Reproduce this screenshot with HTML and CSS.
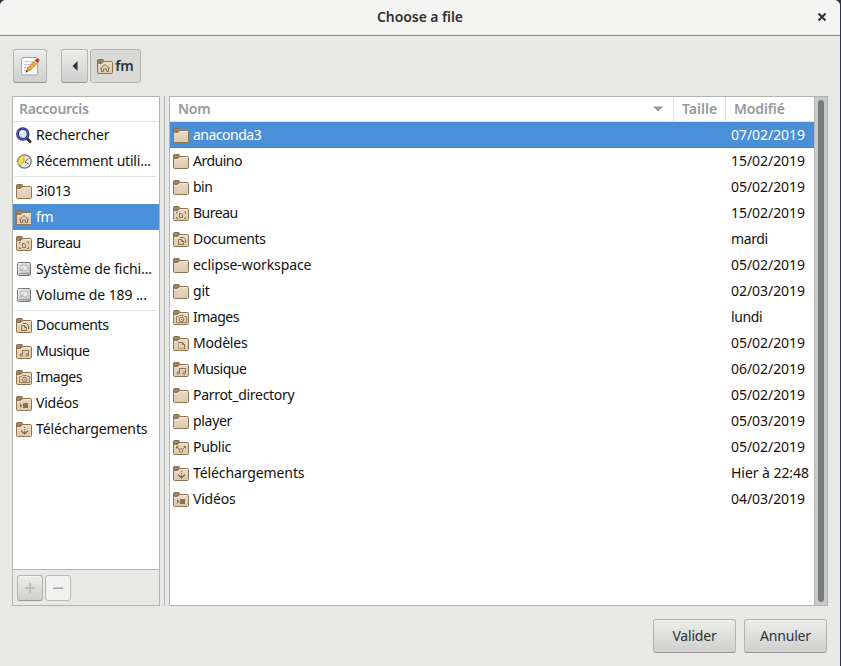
FILE: index.html
```html
<!DOCTYPE html>
<html lang="fr">
<head>
<meta charset="utf-8">
<title>Choose a file</title>
<link rel="stylesheet" href="styles.css">
</head>
<body>
<svg class="defs" aria-hidden="true">
<defs>
<linearGradient id="paper" x2="0" y2="1"><stop offset="0" stop-color="#eadbc7"/><stop offset="1" stop-color="#dcc9ae"/></linearGradient>
<linearGradient id="metal" x2="1" y2="1"><stop offset="0" stop-color="#fff"/><stop offset="1" stop-color="#aaa"/></linearGradient>
<symbol id="folder" viewBox="0 0 16 16"><path d="M.5 13.5V2.5q0-1 1-1h4q1 0 1 1v2h-3q-1 0-1 1z" fill="#9d8667" stroke="#83694a"/><path d="M.5 14.5V6q0-.5.7-.5h3.500l2-2h7.800q1 0 1 1v10q0 1-1 1h-13q-1 0-1-1z" fill="url(#paper)" stroke="#90744f"/><path d="M1.500 6.500h3.700l2-2h7.300" fill="none" stroke="#f2e7d8" stroke-width=".7"/></symbol>
<symbol id="home" viewBox="0 0 16 16"><use href="#folder"/><path d="M3 11l5-4.500 5 4.500M4.500 10.500v3h2v-2.500h3v2.500h2v-3" fill="none" stroke="#8b7350"/></symbol>
<symbol id="desktop" viewBox="0 0 16 16"><use href="#folder"/><path d="M3.500 8.500v-1.500h1.500M11 7h1.500v1.500M3.500 12v1.500h1.500M11 13.500h1.500v-1.500M6.500 8.500h2l1 1v3h-3z" fill="none" stroke="#8b7350"/></symbol>
<symbol id="documents" viewBox="0 0 16 16"><use href="#folder"/><path d="M5.500 8.500h3l2 2v3h-5zM8.500 8.500v2h2M7 6.500h3.500l2 2v3.500" fill="none" stroke="#8b7350"/></symbol>
<symbol id="pictures" viewBox="0 0 16 16"><use href="#folder"/><path d="M3.500 7.500h2l1-1h4l1 1h2v6h-10z" fill="none" stroke="#9c8460"/><circle cx="8.500" cy="10.500" r="2.300" fill="none" stroke="#8b7350"/><circle cx="8.500" cy="10.500" r=".8" fill="#9c8460"/></symbol>
<symbol id="templates" viewBox="0 0 16 16"><use href="#folder"/><path d="M5 7.500h4.500l2 2v4.500M9.500 7.500v2h2" fill="none" stroke="#8b7350"/><path d="M5.500 8.500v5h6" fill="none" stroke="#8b7350" stroke-dasharray="1 1"/></symbol>
<symbol id="music" viewBox="0 0 16 16"><use href="#folder"/><path d="M6.500 12v-4.500h6v4.500" fill="none" stroke="#8b7350"/><circle cx="5.300" cy="12" r="1.200" fill="none" stroke="#8b7350"/><circle cx="11.300" cy="12" r="1.200" fill="none" stroke="#8b7350"/></symbol>
<symbol id="public" viewBox="0 0 16 16"><use href="#folder"/><path d="M3.500 9.500v-2h2M3.500 7.500l2.500 2.500M10.500 7.500h2v2M12.500 7.500L10 10" fill="none" stroke="#8b7350"/><circle cx="8" cy="11.500" r="1.800" fill="none" stroke="#8b7350"/></symbol>
<symbol id="downloads" viewBox="0 0 16 16"><use href="#folder"/><path d="M8.500 6v1M8.500 8v1M8.500 10v3M5 9.800l3.500 3.200L12 9.800" fill="none" stroke="#7f6847" stroke-width="1.200"/></symbol>
<symbol id="videos" viewBox="0 0 16 16"><use href="#folder"/><path d="M7 8h5v5H7zM4 8l2.500 2.500L4 13z" fill="#8b7350"/></symbol>
<symbol id="drive" viewBox="0 0 16 16"><rect x="1.500" y="1.500" width="13" height="13" rx="1.200" fill="url(#metal)" stroke="#777"/><rect x="3" y="3" width="10" height="8" fill="#d5d8d8"/><ellipse cx="8" cy="7" rx="4" ry="3" fill="#e9eaea" stroke="#b7baba"/><path d="M4 10l4-3" stroke="#aaa"/><path d="M3 12.500h10" stroke="#999"/></symbol>
<symbol id="search" viewBox="0 0 16 16"><path d="M11 11.500l3 3" stroke="#333" stroke-width="3" stroke-linecap="round"/><circle cx="6.800" cy="7" r="5.300" fill="#d9e4f4" stroke="#242c77" stroke-width="2.800"/><circle cx="6.800" cy="7" r="5.300" fill="none" stroke="#5266b8" stroke-width="1.100"/><path d="M4 7q1-3 4-3" stroke="#fff" stroke-width="1.500" fill="none"/></symbol>
<symbol id="recent" viewBox="0 0 16 16"><circle cx="8.500" cy="8.500" r="6.700" fill="#e8e8e3" stroke="#777b75" stroke-width="1.300"/><path d="M9 9l3-3.500M9 9l3.500 2" stroke="#555"/><path d="M2.500 7.500q.5-4.500 5.500-5.500v6.500l-1.500 1h1L4 12.500.500 8.500h2z" fill="#f4df52" stroke="#bca31b" stroke-width=".8"/></symbol>
</defs>
</svg>
<div class="window">
<header class="titlebar"><h1>Choose a file</h1><button class="close" aria-label="Fermer"><svg width="10" height="10" viewBox="0 0 10 10"><path d="M1.500 1.500l7 7M8.500 1.500l-7 7" stroke="#2e3436" stroke-width="2"/></svg></button></header>
<div class="toolbar">
<button class="btn edit" aria-label="Modifier"><svg width="22" height="22" viewBox="0 0 22 22"><rect x="2.500" y="2.500" width="16" height="17.500" rx="1.500" fill="#fbfbfb" stroke="#a5a5a5"/><path d="M5 6.500h9M5 9.500h8M5 12.500h5M5 15.500h3" stroke="#c8c8c8"/><path d="M7 17l2-4.500 8-8 2.500 2.500-8 8z" fill="#f2a63c" stroke="#a76716" stroke-width=".7"/><path d="M16 5.500l2-2q2-.5 2.500 2l-2 2z" fill="#d72b25"/><path d="M15 6.500l1-1 2.500 2.500-1 1z" fill="#ccc"/><path d="M6.500 17.500l1-2.500 1.500 1.500z" fill="#444"/></svg></button>
<button class="btn back" aria-label="Précédent"><svg width="6" height="10" viewBox="0 0 6 10"><path d="M5.500 0v10L.5 5z" fill="#2e3436"/></svg></button>
<button class="btn crumb"><svg class="icon"><use href="#home"/></svg><span>fm</span></button>
</div>
<main class="panes">
<aside class="sidebar">
<div class="head">Raccourcis</div>
<ul class="list">
<li class="wide"><svg class="icon"><use href="#search"/></svg><span>Rechercher</span></li>
<li><svg class="icon"><use href="#recent"/></svg><span>Récemment utili...</span></li>
<li class="rule"></li>
<li><svg class="icon"><use href="#folder"/></svg><span>3i013</span></li>
<li class="selected"><svg class="icon"><use href="#home"/></svg><span>fm</span></li>
<li class="tight"><svg class="icon"><use href="#desktop"/></svg><span>Bureau</span></li>
<li class="wide"><svg class="icon"><use href="#drive"/></svg><span>Système de fichi...</span></li>
<li class="wide"><svg class="icon"><use href="#drive"/></svg><span>Volume de 189 ...</span></li>
<li class="rule"></li>
<li class="snug"><svg class="icon"><use href="#documents"/></svg><span>Documents</span></li>
<li class="tight"><svg class="icon"><use href="#music"/></svg><span>Musique</span></li>
<li class="tight"><svg class="icon"><use href="#pictures"/></svg><span>Images</span></li>
<li><svg class="icon"><use href="#videos"/></svg><span>Vidéos</span></li>
<li class="wide"><svg class="icon"><use href="#downloads"/></svg><span>Téléchargements</span></li>
</ul>
<div class="actions"><button class="btn small" aria-label="Ajouter"><svg width="12" height="12"><path d="M1 6h10M6 1v10" stroke="#bdbdbb" stroke-width="2"/></svg></button><button class="btn small flat" aria-label="Retirer"><svg width="12" height="4"><path d="M1 3l1-1.500 1 1.500 1-1.500 1 1.500 1-1.500 1 1.500 1-1.500 1 1.500 1-1.500 1 1.500" fill="none" stroke="#858786" stroke-width=".8"/></svg></button></div>
</aside>
<div class="divider"></div>
<section class="files">
<div class="table">
<div class="head columns"><span class="name">Nom<svg width="10" height="6"><path d="M0 .5h10l-5 5z" fill="#979a9b"/></svg></span><span class="size">Taille</span><span class="date">Modifié</span></div>
<ul class="list">
<li class="selected tight"><svg class="icon"><use href="#folder"/></svg><span>anaconda3</span><time>07/02/2019</time></li>
<li class="tight"><svg class="icon"><use href="#folder"/></svg><span>Arduino</span><time>15/02/2019</time></li>
<li class="tight"><svg class="icon"><use href="#folder"/></svg><span>bin</span><time>05/02/2019</time></li>
<li class="tight"><svg class="icon"><use href="#desktop"/></svg><span>Bureau</span><time>15/02/2019</time></li>
<li class="snug"><svg class="icon"><use href="#documents"/></svg><span>Documents</span><time class="word">mardi</time></li>
<li class="wide"><svg class="icon"><use href="#folder"/></svg><span>eclipse-workspace</span><time>05/02/2019</time></li>
<li><svg class="icon"><use href="#folder"/></svg><span>git</span><time>02/03/2019</time></li>
<li class="tight"><svg class="icon"><use href="#pictures"/></svg><span>Images</span><time class="word">lundi</time></li>
<li><svg class="icon"><use href="#templates"/></svg><span>Modèles</span><time>05/02/2019</time></li>
<li class="tight"><svg class="icon"><use href="#music"/></svg><span>Musique</span><time>06/02/2019</time></li>
<li class="snug"><svg class="icon"><use href="#folder"/></svg><span>Parrot_directory</span><time>05/02/2019</time></li>
<li class="snug"><svg class="icon"><use href="#folder"/></svg><span>player</span><time>05/03/2019</time></li>
<li class="snug"><svg class="icon"><use href="#public"/></svg><span>Public</span><time>05/02/2019</time></li>
<li class="wide"><svg class="icon"><use href="#downloads"/></svg><span>Téléchargements</span><time>Hier à 22:48</time></li>
<li><svg class="icon"><use href="#videos"/></svg><span>Vidéos</span><time>04/03/2019</time></li>
</ul>
</div>
<div class="scrollbar"><div class="thumb"></div></div>
</section>
</main>
<footer class="footer"><button class="btn">Valider</button><button class="btn">Annuler</button></footer>
</div>
</body>
</html>
```
FILE: styles.css
```css
* { box-sizing: border-box; }
body { margin: 0; width: 841px; height: 666px; overflow: hidden; background: #2d3547; font: 14px/20px "Noto Sans", sans-serif; color: #111; }
.defs { position: absolute; width: 0; height: 0; }
.window { width: 840px; height: 666px; display: flex; flex-direction: column; background: #e8e8e7; border-radius: 6px 6px 0 0; overflow: hidden; }
.titlebar { height: 36px; flex: none; display: grid; grid-template-columns: 36px 1fr 36px; align-items: center; background: #f4f4f3; border-bottom: 1px solid #8f8f8a; box-shadow: inset 0 -1px #e5e5e2; }
.titlebar h1 { grid-column: 2; margin: 0; padding-bottom: 2px; text-align: center; font-size: 14px; font-weight: 600; line-height: 20px; letter-spacing: -.08px; color: #2e3436; }
.close { border: 0; padding: 0; background: none; height: 10px; display: flex; margin-left: 13px; margin-bottom: 1px; }
.btn { font: inherit; color: #2e3436; padding: 0; display: flex; align-items: center; justify-content: center; border: 1px solid #b3b3af; border-bottom-color: #969693; border-radius: 3px; background: linear-gradient(#ececeb, #cfcfce); box-shadow: inset 0 1px #f4f4f3; }
.toolbar { height: 60px; flex: none; display: flex; padding: 13px 0 0 13px; }
.toolbar .btn { height: 34px; }
.edit { width: 34px; margin-right: 14px; }
.back { width: 27px; margin-right: 2px; }
.toolbar .crumb { width: 51px; gap: 2px; background: #d9d9d8; border-color: #b3b3af; box-shadow: none; font-weight: 600; }
.icon { width: 16px; height: 16px; flex: none; }
.panes { height: 510px; flex: none; display: flex; padding: 0 12px; }
.sidebar { width: 148px; border: 1px solid #b3b3af; display: flex; flex-direction: column; background: #fff; }
.head { height: 25px; flex: none; border-bottom: 1px solid #e2e2e1; padding-left: 6px; line-height: 24px; font-weight: 600; color: #979a9b; letter-spacing: -.3px; }
.list { list-style: none; margin: 0; padding: 0; flex: 1; }
.list li { height: 26px; display: flex; align-items: center; gap: 4px; padding-left: 3px; white-space: nowrap; letter-spacing: -.2px; }
.list .wide { letter-spacing: -.1px; }
.list .snug { letter-spacing: -.3px; }
.list .tight { letter-spacing: -.5px; }
.list .rule { height: 4px; padding: 0 2px; }
.rule::before { content: ""; height: 1px; flex: 1; background: #e2e2e1; }
.list .selected { background: #4a90d9; color: #fff; }
.files .selected { box-shadow: inset 0 -1px #4385cc; }
.actions { height: 36px; flex: none; display: flex; gap: 2px; align-items: center; padding-left: 4px; background: #e8e8e7; border-top: 1px solid #b3b3af; }
.small { width: 26px; height: 26px; }
.small.flat { background: #f1f1f0; border-color: #b8b8b5; }
.divider { flex: none; width: 5px; border-left: 1px solid #b3b3af; margin-left: 4px; }
.files { width: 659px; border: 1px solid #b3b3af; display: flex; background: #fff; }
.table { flex: none; width: 644px; }
.columns { display: flex; padding: 0; }
.columns .name { width: 504px; padding: 0 10px 0 8px; border-right: 1px solid #e2e2e1; display: flex; justify-content: space-between; align-items: center; }
.size { width: 52px; padding-left: 8px; border-right: 1px solid #e2e2e1; letter-spacing: 0; }
.date { padding-left: 8px; letter-spacing: -.15px; }
.files time { margin-left: auto; width: 83px; letter-spacing: -.05px; }
.files .word { letter-spacing: -.4px; }
.scrollbar { flex: 1; background: #c8caca; padding: 3px 3px 3px 3px; border-left: 1px solid #b7b9b8; }
.thumb { width: 6px; height: 502px; border-radius: 3px; background: #777b7b; }
.footer { display: flex; gap: 8px; justify-content: flex-end; padding: 13px 13px 0 0; }
.footer .btn { width: 83px; height: 34px; letter-spacing: -.2px; }
```
